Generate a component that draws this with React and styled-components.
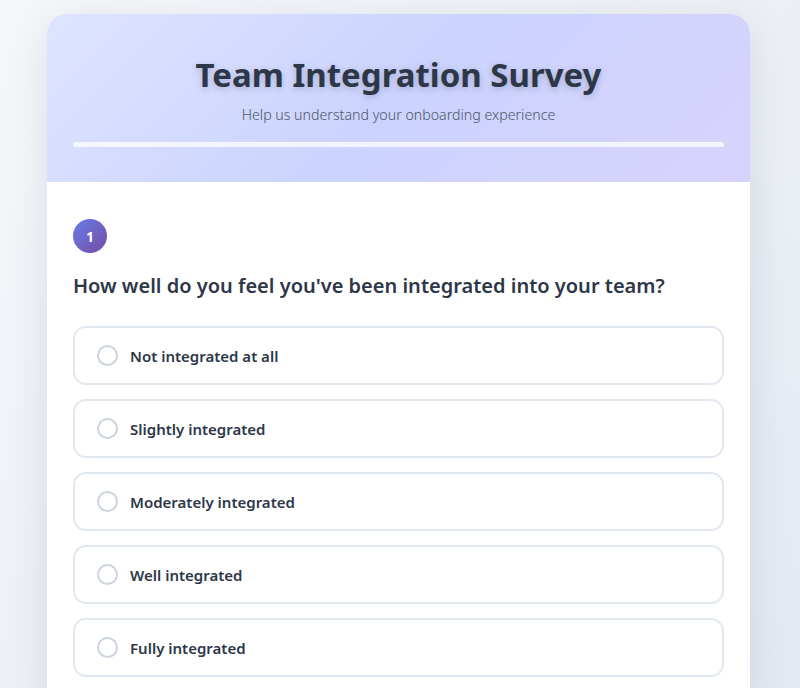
import React from "react";
import styled, { createGlobalStyle } from "styled-components";

const GlobalStyle = createGlobalStyle`
  html, body {
    margin: 0;
    padding: 0;
  }
  body {
    font-family: "Noto Sans", "Open Sans", sans-serif;
    background: linear-gradient(135deg, #f5f7fa 0%, #e4e9f2 100%);
    min-height: 100vh;
  }
`;

const Page = styled.div`
  display: flex;
  justify-content: center;
  padding: 14px 3px 0 0;
`;

const Card = styled.div`
  width: 703px;
  background: #ffffff;
  border-radius: 20px 20px 0 0;
  box-shadow: 0 10px 40px rgba(45, 55, 72, 0.12);
  overflow: hidden;
`;

const Header = styled.div`
  background: linear-gradient(135deg, #dfe4ff 0%, #cbd3fd 50%, #d8d3fc 100%);
  padding: 40px 26px 35px;
  text-align: center;
`;

const Title = styled.h1`
  margin: 0;
  font-size: 33px;
  line-height: 42px;
  font-weight: 700;
  color: #2d3748;
  text-shadow: 0 2px 6px rgba(45, 55, 72, 0.25);
`;

const Subtitle = styled.p`
  margin: 8px 0 0;
  font-size: 14.2px;
  line-height: 22px;
  font-weight: 300;
  color: #4a5568;
`;

const Progress = styled.div`
  margin-top: 16px;
  height: 5px;
  border-radius: 3px;
  background: rgba(255, 255, 255, 0.75);
`;

const Body = styled.div`
  padding: 37px 26px 20px;
`;

const Badge = styled.div`
  width: 34px;
  height: 34px;
  border-radius: 50%;
  background: linear-gradient(135deg, #667eea 0%, #764ba2 100%);
  color: #ffffff;
  font-size: 14px;
  font-weight: 700;
  display: flex;
  align-items: center;
  justify-content: center;
`;

const Question = styled.h2`
  margin: 19px 0 26px;
  font-size: 20px;
  line-height: 28px;
  font-weight: 600;
  color: #2d3748;
`;

const Options = styled.div`
  display: flex;
  flex-direction: column;
  gap: 14px;
`;

const Option = styled.label`
  display: flex;
  align-items: center;
  gap: 12px;
  height: 59px;
  box-sizing: border-box;
  padding: 0 22px;
  border: 2px solid #e2e8f0;
  border-radius: 13px;
  cursor: pointer;
`;

const Radio = styled.span`
  width: 21px;
  height: 21px;
  box-sizing: border-box;
  border: 2px solid #cbd5e0;
  border-radius: 50%;
  flex-shrink: 0;
`;

const OptionText = styled.span`
  font-size: 15px;
  font-weight: 600;
  color: #2d3748;
`;

const options = [
  "Not integrated at all",
  "Slightly integrated",
  "Moderately integrated",
  "Well integrated",
  "Fully integrated",
];

const App = () => {
  return (
    <>
      <GlobalStyle />
      <Page>
        <Card>
          <Header>
            <Title>Team Integration Survey</Title>
            <Subtitle>Help us understand your onboarding experience</Subtitle>
            <Progress />
          </Header>
          <Body>
            <Badge>1</Badge>
            <Question>How well do you feel you've been integrated into your team?</Question>
            <Options>
              {options.map((opt) => (
                <Option key={opt}>
                  <Radio />
                  <OptionText>{opt}</OptionText>
                </Option>
              ))}
            </Options>
          </Body>
        </Card>
      </Page>
    </>
  );
};

export default App;
